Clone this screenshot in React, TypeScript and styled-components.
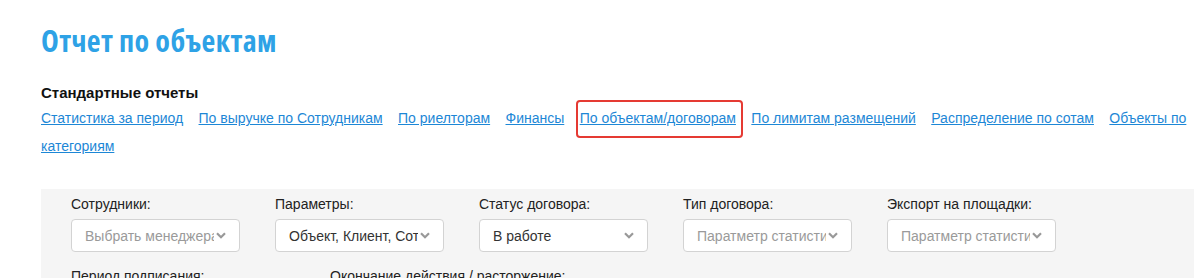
import styled, { createGlobalStyle } from 'styled-components';

const GlobalStyle = createGlobalStyle`
  html, body {
    margin: 0;
    padding: 0;
    background: #fff;
    overflow: hidden;
  }
`;

const Page = styled.div`
  padding: 23px 0 0 41px;
  font-family: 'Liberation Sans', Arial, sans-serif;
  color: #222;
`;

const Title = styled.h1`
  margin: 0;
  font-family: 'Open Sans', sans-serif;
  font-weight: 700;
  font-stretch: 75%;
  font-size: 30px;
  line-height: 36px;
  color: #2ea2e6;
  letter-spacing: 0.4px;
`;

const SectionTitle = styled.h3`
  margin: 25px 0 0;
  font-size: 15px;
  line-height: 18px;
  font-weight: 700;
  color: #111;
`;

const Links = styled.div`
  margin-top: 2px;
  font-size: 14px;
  line-height: 28px;
`;

const ReportLink = styled.a<{ $active?: boolean }>`
  position: relative;
  color: #1d87d6;
  text-decoration: underline;
  margin-right: 15.4px;
  cursor: pointer;

  ${({ $active }) =>
    $active &&
    `
    &::after {
      content: '';
      position: absolute;
      left: -4px;
      right: -7px;
      top: -10px;
      bottom: -12px;
      border: 2.5px solid #e53a33;
      border-radius: 4px;
      pointer-events: none;
    }
  `}
`;

const Filters = styled.div`
  margin-top: 29px;
  background: #f5f5f5;
  padding: 6px 0 20px 30px;
  display: flex;
  flex-direction: column;
  gap: 15px;
`;

const Row = styled.div`
  display: flex;
  gap: 35px;
`;

const Field = styled.div<{ $width?: number }>`
  width: ${({ $width }) => $width ?? 169}px;
  display: flex;
  flex-direction: column;
  gap: 6px;
`;

const Label = styled.label`
  font-size: 14px;
  line-height: 18px;
  color: #222;
  white-space: nowrap;
`;

const Select = styled.div<{ $placeholder?: boolean }>`
  height: 33px;
  box-sizing: border-box;
  border: 1px solid #d3d3d3;
  border-radius: 4px;
  background: #fff;
  display: flex;
  align-items: center;
  padding: 0 13px 0 13px;
  gap: 2px;
  font-size: 14px;
  color: ${({ $placeholder }) => ($placeholder ? '#9a9a9a' : '#333')};
`;

const SelectText = styled.span`
  flex: 1;
  overflow: hidden;
  white-space: nowrap;
`;

const Chevron = () => (
  <svg width="10" height="7" viewBox="0 0 10 7" style={{ flexShrink: 0 }}>
    <path d="M1 1.3 L5 5.3 L9 1.3" fill="none" stroke="#999" strokeWidth="2.2" />
  </svg>
);

const links = [
  'Статистика за период',
  'По выручке по Сотрудникам',
  'По риелторам',
  'Финансы',
  'По объектам/договорам',
  'По лимитам размещений',
  'Распределение по сотам',
  'Объекты по категориям',
];

const selects = [
  { label: 'Сотрудники:', value: 'Выбрать менеджера', placeholder: true },
  { label: 'Параметры:', value: 'Объект, Клиент, Сотрудник', placeholder: false },
  { label: 'Статус договора:', value: 'В работе', placeholder: false },
  { label: 'Тип договора:', value: 'Паратметр статистики', placeholder: true },
  { label: 'Экспорт на площадки:', value: 'Паратметр статистики', placeholder: true },
];

const App = () => {
  return (
    <>
      <GlobalStyle />
      <Page>
        <Title>Отчет по объектам</Title>
        <SectionTitle>Стандартные отчеты</SectionTitle>
        <Links>
          {links.map((l) => (
            <ReportLink key={l} $active={l === 'По объектам/договорам'}>
              {l}
            </ReportLink>
          ))}
        </Links>
        <Filters>
          <Row>
            {selects.map((s) => (
              <Field key={s.label}>
                <Label>{s.label}</Label>
                <Select $placeholder={s.placeholder}>
                  <SelectText>{s.value}</SelectText>
                  <Chevron />
                </Select>
              </Field>
            ))}
          </Row>
          <Row>
            <Field $width={224}>
              <Label>Период подписания:</Label>
              <Select $placeholder>
                <SelectText>с</SelectText>
              </Select>
            </Field>
            <Field $width={300}>
              <Label>Окончание действия / расторжение:</Label>
              <Select $placeholder>
                <SelectText>с</SelectText>
              </Select>
            </Field>
          </Row>
        </Filters>
      </Page>
    </>
  );
};

export default App;
